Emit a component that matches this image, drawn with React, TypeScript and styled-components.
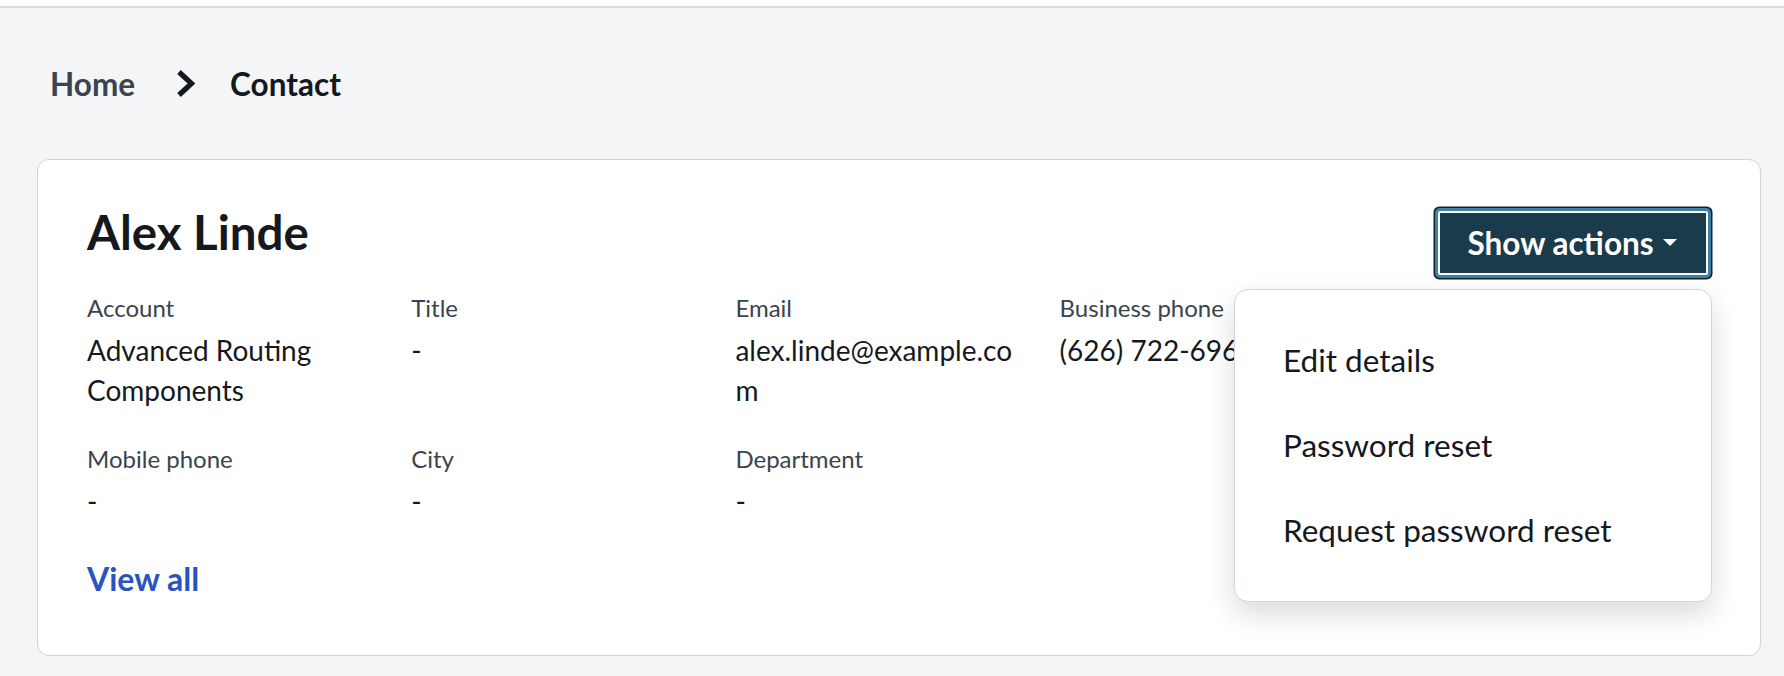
import React from "react";
import styled, { createGlobalStyle } from "styled-components";

const GlobalStyle = createGlobalStyle`
  html, body {
    margin: 0;
    padding: 0;
    background: #f4f5f7;
    font-family: Lato, "Noto Sans", "Liberation Sans", sans-serif;
    color: #15191e;
  }
  * { box-sizing: border-box; }
`;

const TopBar = styled.div`
  height: 8px;
  background: #ffffff;
  border-bottom: 2px solid #d8dbde;
`;

const Main = styled.main`
  padding: 0 23px 20px 37px;
`;

const Breadcrumb = styled.nav`
  display: flex;
  align-items: center;
  padding: 57.5px 0 0 13px;
  font-size: 31.5px;
  font-weight: 700;
  line-height: 1.2;
`;

const Crumb = styled.span<{ $current?: boolean }>`
  color: ${(p) => (p.$current ? "#15191e" : "#3a444e")};
`;

const Separator = styled.span`
  display: inline-flex;
  margin: 0 34px 0 41px;
  color: #15191e;
`;

const Card = styled.section`
  margin-top: 56px;
  background: #ffffff;
  border: 1.5px solid #cfd4d8;
  border-radius: 12px;
  padding: 42px 52px 56.5px 49px;
`;

const Header = styled.div`
  display: flex;
  justify-content: space-between;
  align-items: flex-start;
`;

const Name = styled.h1`
  margin: 0;
  font-size: 47.5px;
  font-weight: 700;
  line-height: 59px;
  color: #15191e;
`;

const ActionsWrap = styled.div`
  position: relative;
  margin-top: 9px;
`;

const ActionsButton = styled.button`
  display: flex;
  align-items: center;
  gap: 9px;
  height: 64px;
  width: 270px;
  padding: 0 0 0 27.5px;
  background: #1a3b4c;
  color: #ffffff;
  border: 2px solid #ffffff;
  border-radius: 2px;
  box-shadow: 0 0 0 3px #3e7fa6, 0 0 0 4.5px #0e2530;
  font-family: Lato, "Noto Sans", "Liberation Sans", sans-serif;
  font-size: 31.5px;
  font-weight: 700;
  white-space: nowrap;
  cursor: pointer;
`;

const Menu = styled.ul`
  position: absolute;
  top: calc(100% + 14px);
  right: -4px;
  width: 478px;
  margin: 0;
  padding: 28px 0 28px;
  list-style: none;
  background: #ffffff;
  border: 1.5px solid #d3d7db;
  border-radius: 14px;
  box-shadow: 0 12px 28px rgba(20, 30, 40, 0.16);
  z-index: 10;
`;

const MenuItem = styled.li`
  height: 85px;
  padding: 0 48px;
  font-size: 31.5px;
  line-height: 85px;
  color: #15191e;
  white-space: nowrap;
`;

const Fields = styled.dl`
  display: grid;
  grid-template-columns: repeat(5, 1fr);
  row-gap: 33px;
  margin: 17px 0 0;
`;

const Field = styled.div<{ $newRow?: boolean }>`
  padding-right: 32px;
  min-width: 0;
  ${(p) => (p.$newRow ? "grid-column: 1;" : "")}
`;

const Label = styled.dt`
  font-size: 24px;
  line-height: 32px;
  color: #3a444e;
  margin-bottom: 6px;
`;

const Value = styled.dd`
  margin: 0;
  font-size: 28px;
  line-height: 40px;
  color: #15191e;
  overflow-wrap: anywhere;
`;

const ViewAll = styled.a`
  display: inline-block;
  margin-top: 39px;
  font-size: 32px;
  font-weight: 700;
  line-height: 38px;
  color: #2853c2;
  text-decoration: none;
`;

const Chevron = () => (
  <svg width="20" height="30" viewBox="0 0 20 30" aria-hidden="true">
    <path d="M3 3 L15.5 14.5 L3 26" fill="none" stroke="currentColor" strokeWidth="5.2" strokeLinejoin="miter" />
  </svg>
);

const Caret = () => (
  <svg width="14" height="8" viewBox="0 0 14 8" aria-hidden="true">
    <path d="M0 0 H14 L7 7 Z" fill="currentColor" />
  </svg>
);

const fields: { label: string; value: string; newRow?: boolean }[] = [
  { label: "Account", value: "Advanced Routing Components" },
  { label: "Title", value: "-" },
  { label: "Email", value: "alex.linde@example.com" },
  { label: "Business phone", value: "(626) 722-6960" },
  { label: "Mobile phone", value: "-", newRow: true },
  { label: "City", value: "-" },
  { label: "Department", value: "-" },
];

export default function App() {
  return (
    <>
      <GlobalStyle />
      <TopBar />
      <Main>
        <Breadcrumb>
          <Crumb>Home</Crumb>
          <Separator>
            <Chevron />
          </Separator>
          <Crumb $current>Contact</Crumb>
        </Breadcrumb>
        <Card>
          <Header>
            <Name>Alex Linde</Name>
            <ActionsWrap>
              <ActionsButton>
                Show actions
                <Caret />
              </ActionsButton>
              <Menu>
                <MenuItem>Edit details</MenuItem>
                <MenuItem>Password reset</MenuItem>
                <MenuItem>Request password reset</MenuItem>
              </Menu>
            </ActionsWrap>
          </Header>
          <Fields>
            {fields.map((f) => (
              <Field key={f.label} $newRow={f.newRow}>
                <Label>{f.label}</Label>
                <Value>{f.value}</Value>
              </Field>
            ))}
          </Fields>
          <ViewAll href="#">View all</ViewAll>
        </Card>
      </Main>
    </>
  );
}
